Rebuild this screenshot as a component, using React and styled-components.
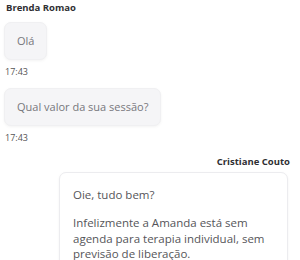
import React from "react";
import styled, { createGlobalStyle } from "styled-components";

const GlobalStyle = createGlobalStyle`
  body {
    margin: 0;
    background: #fff;
    font-family: "Open Sans", "Noto Sans", sans-serif;
  }
`;

const messages = [
  { id: 1, author: "Brenda Romao", text: ["Olá"], time: "17:43", mine: false, showAuthor: true },
  { id: 2, text: ["Qual valor da sua sessão?"], time: "17:43", mine: false },
  {
    id: 3,
    author: "Cristiane Couto",
    text: [
      "Oie, tudo bem?",
      "",
      "Infelizmente a Amanda está sem agenda para terapia individual, sem previsão de liberação.",
    ],
    mine: true,
    showAuthor: true,
  },
];

const App = () => {
  return (
    <>
      <GlobalStyle />
      <ChatWrapper>
        {messages.map((m) => (
          <MessageGroup key={m.id} $mine={m.mine}>
            {m.showAuthor && <Author $mine={m.mine}>{m.author}</Author>}
            <Bubble $mine={m.mine}>
              {m.text.map((line, i) =>
                line === "" ? <Spacer key={i} /> : <Line key={i}>{line}</Line>
              )}
            </Bubble>
            {m.time && <Time>{m.time}</Time>}
          </MessageGroup>
        ))}
      </ChatWrapper>
    </>
  );
};

const ChatWrapper = styled.main`
  display: flex;
  flex-direction: column;
  padding: 0 12px 0 4px;
  height: 260px;
  overflow: hidden;
  box-sizing: border-box;
`;

const MessageGroup = styled.div`
  display: flex;
  flex-direction: column;
  align-items: ${(p) => (p.$mine ? "flex-end" : "flex-start")};
  margin-bottom: 10px;
`;

const Author = styled.strong`
  font-size: 9.5px;
  font-weight: 700;
  color: #2f2f33;
  line-height: 16px;
  margin: ${(p) => (p.$mine ? "0 -2px 2px 0" : "0 0 6px 2px")};
`;

const Bubble = styled.div`
  background: ${(p) => (p.$mine ? "#ffffff" : "#f5f5f7")};
  border: 1px solid ${(p) => (p.$mine ? "#ececef" : "#f0f0f2")};
  border-radius: 7px;
  box-shadow: 0 1px 3px rgba(0, 0, 0, 0.05);
  padding: ${(p) => (p.$mine ? "14px 13px" : "10px 12px")};
  width: ${(p) => (p.$mine ? "229px" : "auto")};
  box-sizing: border-box;
  font-size: ${(p) => (p.$mine ? "11.5px" : "11px")};
  line-height: ${(p) => (p.$mine ? "15.5px" : "16px")};
  color: ${(p) => (p.$mine ? "#555559" : "#77777c")};
`;

const Line = styled.div``;

const Spacer = styled.div`
  height: 12.5px;
`;

const Time = styled.span`
  font-size: 9px;
  color: #555;
  line-height: 12px;
  margin: 6px 0 0 1px;
`;

export default App;
